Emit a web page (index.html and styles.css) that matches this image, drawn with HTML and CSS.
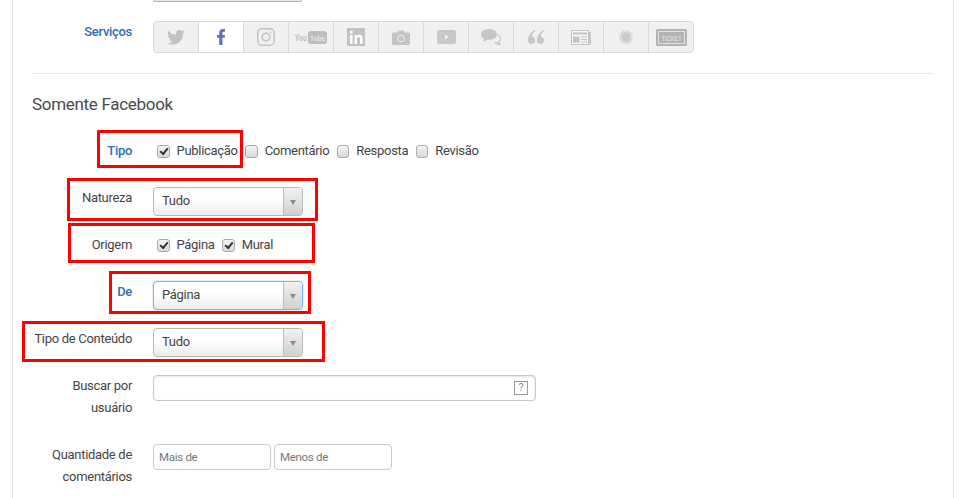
FILE: index.html
```html
<!DOCTYPE html>
<html lang="pt">
<head>
<meta charset="utf-8">
<title>Somente Facebook</title>
<link rel="stylesheet" href="styles.css">
</head>
<body>
<main class="panel">
  <div class="stub"></div>
  <div class="row row-services">
    <div class="label active">Serviços</div>
    <div class="services">
      <span class="svc"><svg viewBox="0 0 24 20" width="18" height="15"><path d="M24 2.400c-.9.4-1.800.7-2.800.8 1-.6 1.800-1.600 2.200-2.700-1 .6-2 1-3.100 1.200A4.900 4.900 0 0 0 11.900 6.200C7.800 6 4.200 4 1.700.9c-1.300 2.200-.7 5.100 1.500 6.600-.8 0-1.600-.2-2.200-.6 0 2.400 1.700 4.400 3.900 4.900-.7.2-1.500.2-2.200.1.600 2 2.400 3.400 4.600 3.400A9.900 9.900 0 0 1 0 17.300 14 14 0 0 0 7.500 19.500c9.100 0 14.300-7.700 14-14.600 1-.7 1.800-1.600 2.500-2.500z" fill="#c2c2c2"/></svg></span>
      <span class="svc on"><svg viewBox="0 0 10 20" width="8" height="16"><path d="M6.800 20V11h2.900l.3-3.600H6.800V5.200c0-1 .3-1.700 1.700-1.700H10V.2C9.700.1 8.600 0 7.400 0 4.800 0 2.800 1.600 2.800 4.500v2.900H0V11h2.800v9z" fill="#5d75b5"/></svg></span>
      <span class="svc"><svg viewBox="0 0 18 18" width="18" height="18" fill="none" stroke="#c2c2c2" stroke-width="1.500"><rect x=".8" y=".8" width="16.400" height="16.400" rx="4"/><circle cx="9" cy="9" r="3.800"/><circle cx="13.700" cy="4.300" r=".9" fill="#c2c2c2" stroke="none"/></svg></span>
      <span class="svc"><svg viewBox="0 0 32 13" width="32" height="13"><rect x="13" y="0" width="19" height="13" rx="3" fill="#bdbdbd"/><text class="yt yt-dark" x="0" y="10" textLength="12" lengthAdjust="spacingAndGlyphs">You</text><text class="yt yt-light" x="15" y="9.500" textLength="15" lengthAdjust="spacingAndGlyphs">Tube</text></svg></span>
      <span class="svc"><svg viewBox="0 0 18 18" width="18" height="18"><rect width="18" height="18" rx="1" fill="#c2c2c2"/><path d="M3 7h2.600v9H3zM3 2.800h2.600v2.700H3zM7.500 7H10v1.200C10.600 7.300 11.500 6.800 12.600 6.800c2.200 0 3 1.400 3 3.600V16H13v-5.100c0-1.100-.4-1.800-1.400-1.800S10 9.800 10 10.900V16H7.500z" fill="#fff"/></svg></span>
      <span class="svc"><svg viewBox="0 0 18 15" width="18" height="15"><path d="M1.500 2.500h3.700L6.500.5h5l1.300 2h3.700c.8 0 1.500.7 1.500 1.500v9.500c0 .8-.7 1.500-1.500 1.500h-15C.7 15 0 14.300 0 13.500V4c0-.8.700-1.500 1.500-1.500z" fill="#c4c4c4"/><circle cx="9" cy="8.500" r="3.300" fill="none" stroke="#f1f1f1" stroke-width="1"/></svg></span>
      <span class="svc"><svg viewBox="0 0 19 14" width="19" height="14"><rect width="19" height="14" rx="2.500" fill="#c8c8c8"/><path d="M8 4.500l3.500 2.500L8 9.500z" fill="#f4f4f4"/></svg></span>
      <span class="svc"><svg viewBox="0 0 20 16" width="20" height="16"><path d="M13.600 5.500c3.300 0 6 1.800 6 4.200 0 1.300-.8 2.400-2 3.100.1.900.6 1.900 1.300 2.700-1.500-.2-3-.9-3.800-1.900-.5.100-1 .2-1.500.2" fill="none" stroke="#c2c2c2" stroke-width="1.200"/><path d="M8 0c4.400 0 8 2.400 8 5.400s-3.600 5.400-8 5.400c-.6 0-1.200 0-1.700-.1C5 11.900 3.300 12.500 1.700 12.600c.8-.8 1.300-1.700 1.400-2.600C1.200 9 0 7.300 0 5.400 0 2.400 3.600 0 8 0z" fill="#c6c6c6"/></svg></span>
      <span class="svc"><svg viewBox="0 0 16 14" width="16" height="14"><path d="M3.500 14C1.500 14 0 12.500 0 10.400 0 6 2.700 2 6.800 0l.7 1C5.300 2.600 4 4.400 3.700 6.800 5.600 6.700 7 8.300 7 10.300 7 12.400 5.500 14 3.500 14zM12.500 14C10.500 14 9 12.500 9 10.400 9 6 11.700 2 15.800 0l.2 1C14.300 2.600 13 4.400 12.700 6.800 14.600 6.700 16 8.300 16 10.300 16 12.400 14.500 14 12.500 14z" fill="#c6c6c6"/></svg></span>
      <span class="svc"><svg viewBox="0 0 20 15" width="20" height="15"><rect x=".5" y=".5" width="17" height="14" fill="#f6f6f6" stroke="#c2c2c2"/><rect x="18" y="2" width="2" height="12.500" fill="#c8c8c8"/><rect x="2" y="2.500" width="14" height="2" fill="#c2c2c2"/><rect x="2" y="6.500" width="6.500" height="6" fill="#c2c2c2"/><path d="M10 7h6M10 9.500h6M10 12h6" stroke="#c2c2c2"/></svg></span>
      <span class="svc"><svg viewBox="-7 -7 14 14" width="14" height="14"><circle r="3.800" fill="#c8c8c8"/><path d="M0-7V7M-7 0H7M-5-5L5 5M-5 5L5-5M-2.700-6.500L2.700 6.500M2.700-6.500L-2.700 6.500M-6.500-2.700L6.500 2.700M-6.500 2.700L6.500-2.700" stroke="#c8c8c8" stroke-width="1.100"/></svg></span>
      <span class="svc"><svg viewBox="0 0 33 17" width="33" height="17"><rect x="1" y="0" width="31" height="17" rx="1.500" fill="#b4b4b4"/><rect x="3.500" y="2.500" width="26" height="12" fill="none" stroke="#e0e0e0"/><text class="ticket" x="6.500" y="11.500" textLength="20" lengthAdjust="spacingAndGlyphs">TICKET</text></svg></span>
    </div>
  </div>
  <hr class="divider">
  <h2 class="title">Somente Facebook</h2>

  <div class="row row-tipo">
    <div class="label active">Tipo</div>
    <div class="checks">
      <label class="check"><span class="box checked"></span>Publicação</label>
      <label class="check"><span class="box"></span>Comentário</label>
      <label class="check"><span class="box"></span>Resposta</label>
      <label class="check"><span class="box"></span>Revisão</label>
    </div>
  </div>
  <div class="row row-natureza">
    <div class="label">Natureza</div>
    <div class="select"><span class="value">Tudo</span><span class="arrow"></span></div>
  </div>
  <div class="row row-origem">
    <div class="label">Origem</div>
    <div class="checks">
      <label class="check"><span class="box checked"></span>Página</label>
      <label class="check"><span class="box checked"></span>Mural</label>
    </div>
  </div>
  <div class="row row-de">
    <div class="label active">De</div>
    <div class="select focus"><span class="value">Página</span><span class="arrow"></span></div>
  </div>
  <div class="row row-conteudo">
    <div class="label">Tipo de Conteúdo</div>
    <div class="select"><span class="value">Tudo</span><span class="arrow"></span></div>
  </div>
  <div class="row row-buscar">
    <div class="label tall">Buscar por<br>usuário</div>
    <div class="search"><span class="help">?</span></div>
  </div>
  <div class="row row-qtd">
    <div class="label tall">Quantidade de<br>comentários</div>
    <div class="pair">
      <div class="field">Mais de</div>
      <div class="field">Menos de</div>
    </div>
  </div>

  <div class="mark mark-tipo"></div>
  <div class="mark mark-natureza"></div>
  <div class="mark mark-origem"></div>
  <div class="mark mark-de"></div>
  <div class="mark mark-conteudo"></div>
</main>
</body>
</html>
```
FILE: styles.css
```css
* { box-sizing: border-box; }
html, body { margin: 0; padding: 0; background: #fff; }
body {
  width: 964px;
  height: 498px;
  overflow: hidden;
  font-family: "Roboto", sans-serif;
  font-size: 13px;
  letter-spacing: -0.3px;
  color: #444;
}
.panel {
  position: relative;
  margin-left: 12px;
  width: 942px;
  height: 498px;
  padding: 0 20px;
  border-left: 1px solid #e2e2ec;
  border-right: 1px solid #e2e2ec;
}
.stub {
  width: 149px;
  height: 2px;
  margin-left: 120px;
  border: 1px solid #b0b0b0;
  border-top: 0;
  border-radius: 0 0 4px 4px;
  background: #e8e8e8;
}
.row {
  display: flex;
  align-items: flex-start;
}
.label {
  width: 99px;
  margin: 0 21px 0 0;
  text-align: right;
  line-height: 22px;
  white-space: nowrap;
  flex: none;
  color: #444;
}
.label.active { color: #2f6db5; font-weight: 500; }
.row-services { margin-top: 19px; }
.services {
  display: flex;
  width: 541px;
  height: 32px;
  border: 1px solid #d8d8d8;
  border-radius: 4px;
  background: #f0f0f0;
  overflow: hidden;
}
.svc {
  width: 45px;
  flex: none;
  display: flex;
  align-items: center;
  justify-content: center;
  border-right: 1px solid #d8d8d8;
}
.svc:last-child { border-right: 0; width: 44px; }
.svc.on { background: #fff; }
.yt { font-size: 9px; font-weight: 700; letter-spacing: 0; }
.yt-dark { fill: #c0c0c0; }
.yt-light { font-size: 7.500px; fill: #e4e4e4; }
.ticket { font-size: 7.500px; fill: #e8e8e8; letter-spacing: 0; }
.divider {
  margin: 20px 0 0;
  height: 1px;
  border: 0;
  background: #e6e6e6;
}
.title {
  margin: 19px 0 0 -1px;
  font-size: 17px;
  line-height: 22px;
  font-weight: 400;
  color: #4a4a4a;
}
.checks { display: flex; gap: 3.500px; line-height: 22px; }
.check { display: flex; align-items: center; }
.box {
  width: 12.500px;
  height: 13px;
  margin: 0 7px 0 4px;
  border: 1px solid #aaa;
  border-radius: 3px;
  background: linear-gradient(#f4f4f4, #d8d8d8);
  position: relative;
}
.box.checked::after {
  content: "";
  position: absolute;
  left: 2px;
  top: 2px;
  width: 6px;
  height: 3px;
  border-left: 2px solid #333;
  border-bottom: 2px solid #333;
  transform: rotate(-50deg);
}
.select {
  display: flex;
  width: 150px;
  height: 29px;
  border: 1px solid #b8b8b8;
  border-radius: 4px;
  background: linear-gradient(#fff 40%, #ececec);
  overflow: hidden;
}
.select.focus {
  border-color: #7fb0e6;
  box-shadow: 0 0 2px #9cc4ee;
}
.value { flex: 1; padding-left: 8px; line-height: 25px; color: #444; }
.arrow {
  width: 19px;
  border-left: 1px solid #bdbdbd;
  background: linear-gradient(#f2f2f2, #d0d0d0);
  position: relative;
}
.arrow::after {
  content: "";
  position: absolute;
  left: 6px;
  top: 12px;
  border-left: 3px solid transparent;
  border-right: 3px solid transparent;
  border-top: 5px solid #8c8c8c;
}
.row-tipo { margin-top: 25px; }
.row-natureza { margin-top: 25px; }
.row-origem { margin-top: 18px; }
.row-de { margin-top: 25px; }
.row-conteudo { margin-top: 18px; }
.row-buscar { margin-top: 18px; }
.row-qtd { margin-top: 0; }
.label.tall { height: 69px; }
.search {
  position: relative;
  width: 383px;
  height: 26px;
  border: 1px solid #c8c8c8;
  border-radius: 4px;
  box-shadow: inset 0 1px 2px #e4e4e4;
}
.help {
  position: absolute;
  right: 7px;
  top: 5px;
  width: 14px;
  height: 14px;
  border: 1px solid #999;
  font-size: 11px;
  line-height: 12px;
  text-align: center;
  color: #888;
}
.pair { display: flex; gap: 3px; }
.field {
  width: 118px;
  height: 26px;
  padding-left: 5px;
  border: 1px solid #c8c8c8;
  border-radius: 4px;
  font-size: 11.500px;
  line-height: 25px;
  color: #777;
}
.mark {
  position: absolute;
  border: 3px solid #f00;
  pointer-events: none;
}
.mark-tipo { left: 84px; top: 130px; width: 146px; height: 38px; }
.mark-natureza { left: 54px; top: 178px; width: 251px; height: 43px; }
.mark-origem { left: 55px; top: 223px; width: 247px; height: 40px; }
.mark-de { left: 96px; top: 271px; width: 202px; height: 43px; }
.mark-conteudo { left: 9px; top: 321px; width: 303px; height: 41px; }
```
